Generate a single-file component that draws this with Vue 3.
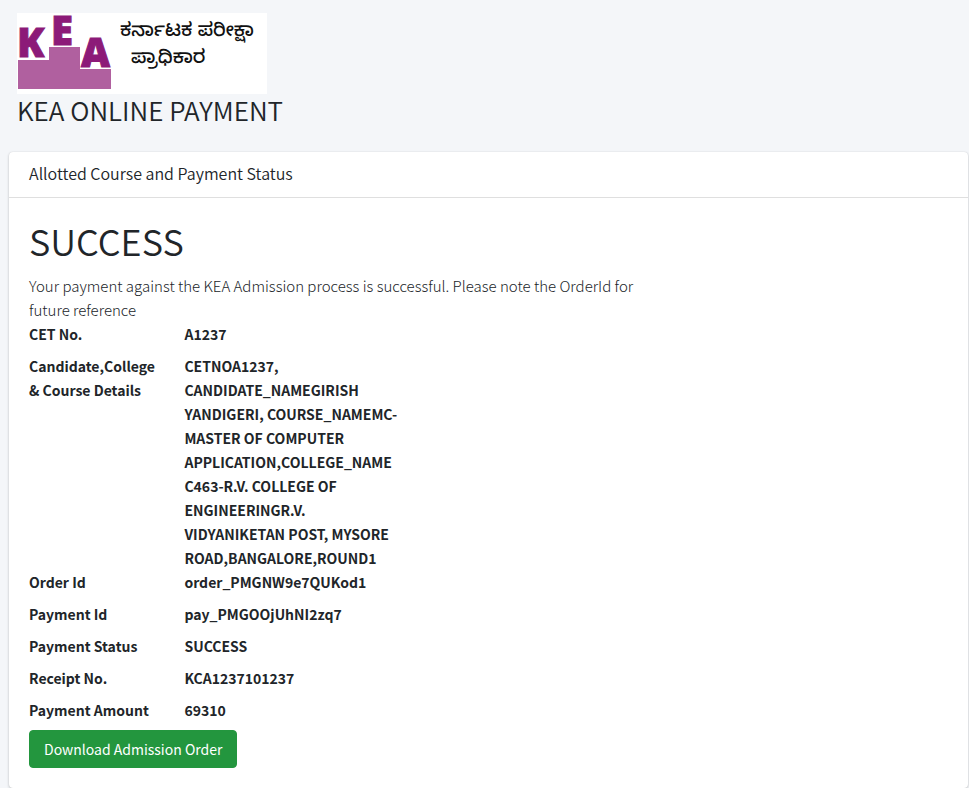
<script setup>
const rows = [
  { label: 'CET No.', value: 'A1237' },
  {
    label: 'Candidate,College\n& Course Details',
    value: [
      'CETNOA1237,',
      'CANDIDATE_NAMEGIRISH',
      'YANDIGERI, COURSE_NAMEMC-',
      'MASTER OF COMPUTER',
      'APPLICATION,COLLEGE_NAME',
      'C463-R.V. COLLEGE OF',
      'ENGINEERINGR.V.',
      'VIDYANIKETAN POST, MYSORE',
      'ROAD,BANGALORE,ROUND1'
    ].join('\n'),
    tight: true
  },
  { label: 'Order Id', value: 'order_PMGNW9e7QUKod1' },
  { label: 'Payment Id', value: 'pay_PMGOOjUhNI2zq7' },
  { label: 'Payment Status', value: 'SUCCESS' },
  { label: 'Receipt No.', value: 'KCA1237101237' },
  { label: 'Payment Amount', value: '69310' }
]
</script>

<template>
  <div class="page">
    <header class="page-header">
      <svg class="logo" viewBox="0 0 250 81" role="img" aria-label="KEA">
        <rect width="250" height="81" fill="#fff" />
        <path d="M1 47H32V34H63V56H94V76H1Z" fill="#b0609f" />
        <g class="logo-letters">
          <text x="0" y="44">K</text>
          <text x="34" y="32">E</text>
          <text x="64" y="54">A</text>
        </g>
        <g class="logo-name">
          <text x="103" y="23">ಕರ್ನಾಟಕ ಪರೀಕ್ಷಾ</text>
          <text x="114" y="50">ಪ್ರಾಧಿಕಾರ</text>
        </g>
      </svg>
      <h1 class="page-title">KEA ONLINE PAYMENT</h1>
    </header>

    <main class="card">
      <div class="card-header">
        <h2 class="card-title">Allotted Course and Payment Status</h2>
      </div>
      <div class="card-body">
        <h2 class="status">SUCCESS</h2>
        <div class="content">
          <p class="message">
            Your payment against the KEA Admission process is successful. Please note the OrderId for<br />
            future reference
          </p>
          <dl class="details">
            <div v-for="row in rows" :key="row.label" class="row" :class="{ tight: row.tight }">
              <dt>{{ row.label }}</dt>
              <dd>{{ row.value }}</dd>
            </div>
          </dl>
          <button type="button" class="download">Download Admission Order</button>
        </div>
      </div>
    </main>
  </div>
</template>

<style>
body {
  margin: 0;
  background: #f4f6f9;
}
</style>

<style scoped>
.page {
  box-sizing: border-box;
  padding: 13px 1px 0 9px;
  color: #212529;
  font-family: "Source Sans Pro", "Noto Sans CJK JP", "Noto Sans", sans-serif;
  font-size: 14px;
  line-height: 24px;
  font-weight: 350;
}
.page-header {
  padding: 0 8px;
  margin-bottom: 27px;
}
.logo {
  display: block;
  width: 250px;
  height: 81px;
  overflow: visible;
}
.logo-letters {
  fill: #8c1a78;
  stroke: #8c1a78;
  stroke-width: 1;
  font-family: "Open Sans", sans-serif;
  font-size: 40px;
  font-weight: 800;
}
.logo-name {
  fill: #111;
  font-family: "Noto Sans Kannada", "Noto Sans", sans-serif;
  font-size: 19px;
  font-weight: 500;
}
.page-title {
  margin: 0;
  font-size: 26px;
  line-height: 31px;
  font-weight: 350;
}
.card {
  background: #fff;
  border-radius: 4px;
  box-shadow: 0 0 1px rgba(0, 0, 0, 0.13), 0 1px 3px rgba(0, 0, 0, 0.2);
}
.card-header {
  padding: 11px 20px 13px;
  border-bottom: 1px solid rgba(0, 0, 0, 0.125);
}
.card-title {
  margin: 0;
  font-size: 16px;
  line-height: 21px;
  font-weight: 350;
}
.card-body {
  padding: 20px;
}
.status {
  margin: 0 0 12px;
  font-size: 36px;
  line-height: 44px;
  font-weight: 350;
}
.content {
  width: 67%;
}
.message {
  margin: 0;
  font-size: 15px;
  font-weight: 300;
}
.details {
  margin: 0;
  font-weight: 700;
}
.row {
  display: grid;
  grid-template-columns: 1fr 3fr;
  column-gap: 2px;
  margin-bottom: 8px;
}
.row.tight {
  margin-bottom: 0;
}
dt,
dd {
  margin: 0;
  white-space: pre-line;
}
.download {
  padding: 6px 14px;
  border: 1px solid #23963e;
  border-radius: 4px;
  background: #23963e;
  color: #fff;
  font: inherit;
  font-weight: 400;
  cursor: pointer;
}
</style>
